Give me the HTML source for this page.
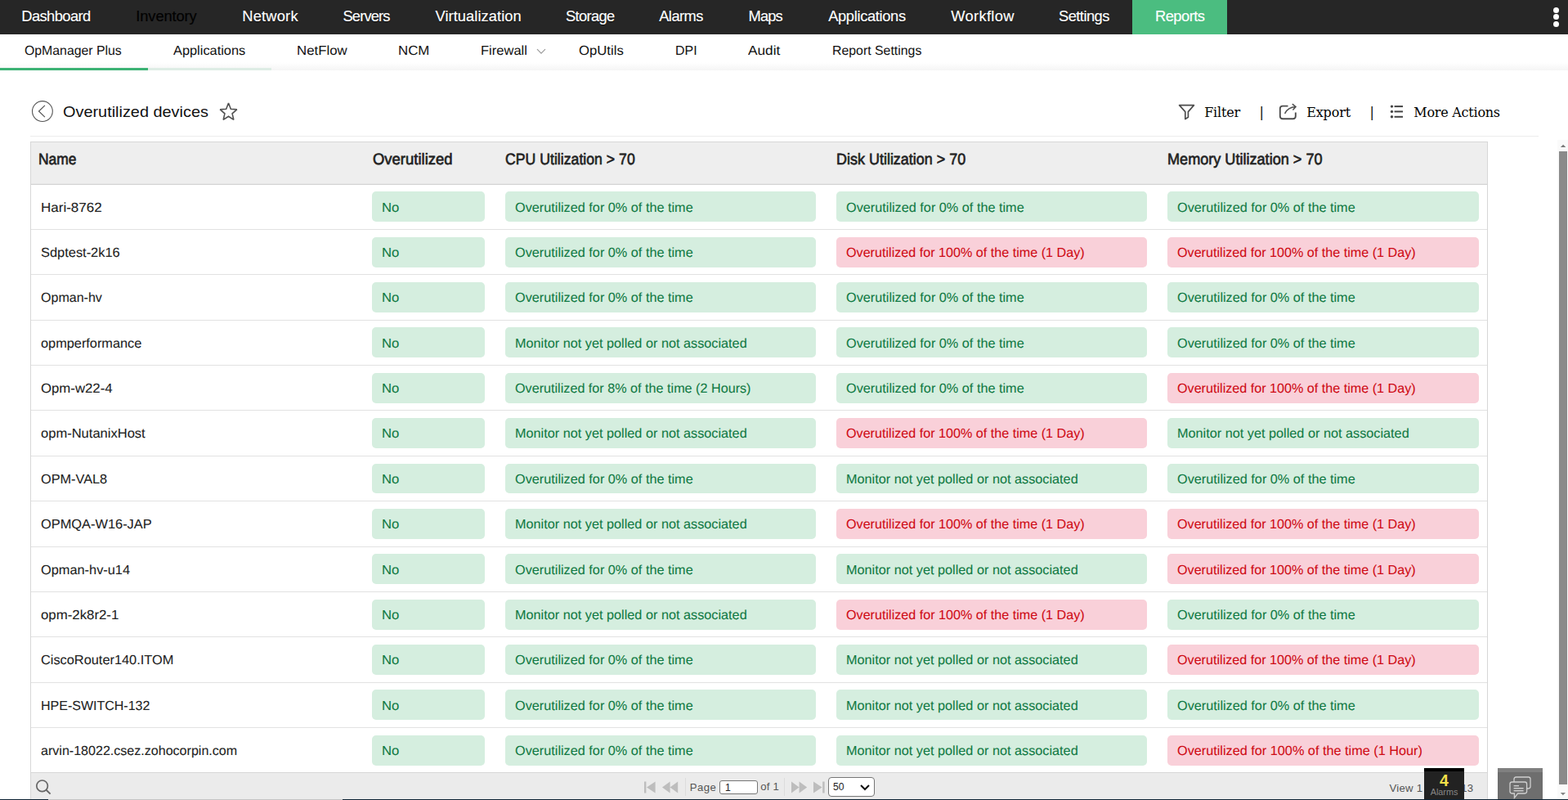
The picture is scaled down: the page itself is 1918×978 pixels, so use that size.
<!DOCTYPE html>
<html lang="en"><head><meta charset="utf-8"><title>Overutilized devices</title>
<style>
*{box-sizing:border-box;margin:0;padding:0}
a{color:inherit;text-decoration:none}
h1{font-weight:400}
html,body{width:1918px;height:978px;overflow:hidden;background:#fff}
body{position:relative;font-family:"Liberation Sans", Arial, sans-serif;font-size:16px;color:#222}
.t{position:absolute;white-space:pre;line-height:1;transform-origin:0 0}
#topnav{position:absolute;left:0;top:0;width:1918px;height:42px;background:#262626}
#topnav .t{font-size:18.3px;color:#fff;top:11px;text-shadow:0 1px 1px rgba(0,0,0,.6);-webkit-text-stroke:0.15px #fff}
#topnav .act0{text-shadow:none}
#topnav .dim{color:#020202;text-shadow:none;-webkit-text-stroke:0.2px #020202}
#rep{position:absolute;left:1385px;top:0;width:116px;height:42px;background:#4bbd80}
.dot{position:absolute;left:1900px;width:7px;height:7px;border-radius:50%;background:#fff}
#subnav{position:absolute;left:0;top:42px;width:1918px;height:44px;background:linear-gradient(#fff 0,#fff 78%,#f5f5f5 100%)}
#subnav .t{font-size:16px;color:#111;top:13px;text-rendering:geometricPrecision}
#ul1{position:absolute;left:0;top:41px;width:181px;height:3px;background:#3cb274}
#ul2{position:absolute;left:181px;top:41px;width:151px;height:3px;background:#deede5}
.ttl{font-size:18.5px;color:#111;top:128px}
.act{font-family:"DejaVu Serif", "Liberation Serif", serif;font-size:16px;color:#000;top:130px}
.sepb{font-family:"DejaVu Serif", "Liberation Serif", serif;font-size:16px;color:#000;top:130px}
#sep{position:absolute;left:37px;top:166px;width:1845px;height:1px;background:#ececec}
#tbl{position:absolute;left:37px;top:173px;width:1783px;height:806px;border:1px solid #d7d7d7;border-bottom:0;background:#fff}
#thead{position:absolute;left:38px;top:174px;width:1781px;height:51px;background:#eee}
#thb{position:absolute;left:38px;top:224px;width:1781px;height:2px;background:linear-gradient(#e8e8e8 50%,#d3d3d3 50%)}
.th{font-size:19.3px;font-weight:400;text-rendering:geometricPrecision;-webkit-text-stroke:0.65px #222;color:#222;top:185.5px}
.rb{position:absolute;left:38px;width:1781px;height:1px;background:#e2e2e2}
.nm{font-size:16px;color:#222;text-rendering:geometricPrecision;-webkit-text-stroke:0.08px currentColor}
.p{position:absolute;height:37px;border-radius:5px;font-size:16px;white-space:pre;overflow:hidden;text-rendering:geometricPrecision;-webkit-text-stroke:0.08px currentColor}
.g{background:#d5eedf;color:#117a44}
.r{background:#f9d0d9;color:#cf0a14}
.c1{left:455px;width:138px}.c2{left:618px;width:380px}.c3{left:1023px;width:380px}.c4{left:1428px;width:381px}
#pager{position:absolute;left:38px;top:944px;width:1781px;height:34px;background:#ebebeb;border-top:1px solid #d6d6d6}
.pg{font-size:13.2px;color:#555;top:956px}
#pin{position:absolute;left:880px;top:954px;width:47px;height:17px;border:1px solid #767676;border-radius:3px;background:#fff;font-size:12.2px;line-height:16px;padding-left:6px;color:#222}
#psel{position:absolute;left:1013px;top:950px;width:57px;height:24px;border:1px solid #767676;border-radius:4px;background:#fff;font-size:12.2px;line-height:23px;padding-left:5px;color:#222}
.vs{position:absolute;top:951px;width:1px;height:22px;background:#dcdcdc}
#sbt{position:absolute;left:1905px;top:171px;width:13px;height:807px;background:#fafafa}
#sbh{position:absolute;left:1907px;top:185px;width:10px;height:774px;background:#8a8a8a}
#alarm{position:absolute;left:1742px;top:939px;width:49px;height:39px;background:#222;border-top:4px solid #000}
#chat{position:absolute;left:1832px;top:939px;width:55px;height:39px;background:#6e6e6e;border-top:5px solid #808080}
#bl1{position:absolute;left:0;top:977px;width:1918px;height:1px;background:#0d2233}
#bl2{position:absolute;left:59px;top:977px;width:360px;height:1px;background:#c4c4c4}
svg{position:absolute;overflow:visible}
</style></head>
<body>
<nav id="topnav">
<div id="rep"></div>
<a href="#" id="t1" class="t" style="left:26.25px;letter-spacing:-0.56px;">Dashboard</a>
<a href="#" id="t2" class="t dim" style="left:166.33px;letter-spacing:-0.1px;">Inventory</a>
<a href="#" id="t3" class="t" style="left:296.25px;letter-spacing:0.21px;">Network</a>
<a href="#" id="t4" class="t" style="left:419.47px;letter-spacing:-0.83px;">Servers</a>
<a href="#" id="t5" class="t" style="left:532.5px;letter-spacing:0.07px;">Virtualization</a>
<a href="#" id="t6" class="t" style="left:691.97px;letter-spacing:-0.62px;">Storage</a>
<a href="#" id="t7" class="t" style="left:806.2px;letter-spacing:-0.52px;">Alarms</a>
<a href="#" id="t8" class="t" style="left:915.61px;letter-spacing:-0.88px;">Maps</a>
<a href="#" id="t9" class="t" style="left:1013.2px;letter-spacing:-0.34px;">Applications</a>
<a href="#" id="t10" class="t" style="left:1163.2px;letter-spacing:0.35px;">Workflow</a>
<a href="#" id="t11" class="t" style="left:1295.02px;letter-spacing:-0.53px;">Settings</a>
<a href="#" id="t12" class="t act0" style="left:1413.03px;letter-spacing:-0.51px;">Reports</a>
<i class="dot" style="top:8.5px"></i><i class="dot" style="top:17px"></i><i class="dot" style="top:25.5px"></i>
</nav>
<nav id="subnav"><div id="ul1"></div><div id="ul2"></div>
<a href="#" id="t13" class="t" style="left:30.25px;transform:scale(0.9892,1.0);">OpManager Plus</a>
<a href="#" id="t14" class="t" style="left:211.54px;transform:scale(1.0224,1.0);">Applications</a>
<a href="#" id="t15" class="t" style="left:362.73px;transform:scale(1.0509,1.0);">NetFlow</a>
<a href="#" id="t16" class="t" style="left:487.49px;transform:scale(1.0518,1.0);">NCM</a>
<a href="#" id="t17" class="t" style="left:587.95px;transform:scale(1.0325,1.0);">Firewall</a>
<a href="#" id="t18" class="t" style="left:708.32px;transform:scale(1.0447,1.0);">OpUtils</a>
<a href="#" id="t19" class="t" style="left:826.01px;transform:scale(0.9968,1.0);">DPI</a>
<a href="#" id="t20" class="t" style="left:914.54px;transform:scale(1.0777,1.0);">Audit</a>
<a href="#" id="t21" class="t" style="left:1017.89px;transform:scale(0.9914,1.0);">Report Settings</a>
<svg style="left:655.5px;top:17px" width="12" height="8" viewBox="0 0 12 8"><path d="M1 1.2 L6 6.2 L11 1.2" fill="none" stroke="#9a9a9a" stroke-width="1.2"/></svg>
</nav>
<svg style="left:38px;top:122px" width="28" height="28" viewBox="0 0 28 28"><circle cx="13.9" cy="14.05" r="12.4" fill="none" stroke="#555" stroke-width="1.1"/><path d="M16.9 6.9 L9.5 14 L16.9 21.1" fill="none" stroke="#555" stroke-width="1.2"/></svg>
<h1 id="t22" class="t ttl" style="left:77.23px;transform:scale(1.0747,1.03);">Overutilized devices</h1>
<svg style="left:268px;top:125px" width="23" height="23" viewBox="0 0 23 23"><path d="M11.50 1.07 L14.32 8.26 L21.77 8.83 L16.07 13.84 L17.85 21.39 L11.50 17.29 L5.15 21.39 L6.93 13.84 L1.23 8.83 L8.68 8.26 Z" fill="none" stroke="#505050" stroke-width="1.6" stroke-linejoin="miter" stroke-miterlimit="2.2"/></svg>
<svg style="left:1441px;top:127px" width="21" height="20" viewBox="0 0 21 20"><path d="M1.6 1.6 H19.4 L12.4 9.6 V16.2 L8.8 18.6 V9.6 Z" fill="none" stroke="#4d4d4d" stroke-width="1.7" stroke-linejoin="round"/></svg>
<span id="t23" class="t act" style="left:1473.14px;letter-spacing:-0.19px;">Filter</span>
<span class="t sepb" style="left:1540.4px">|</span>
<svg style="left:1564px;top:126px" width="24" height="21" viewBox="0 0 24 21"><path d="M11.5 3.6 H5 Q1.8 3.6 1.8 6.8 V16 Q1.8 19.2 5 19.2 H17.6 Q20.8 19.2 20.8 16 V11.4" fill="none" stroke="#4e4e4e" stroke-width="1.9"/><path d="M7.6 12.8 Q11.5 5.2 20.6 4.6 M16.8 1.2 L21 4.6 L17.4 8.6" fill="none" stroke="#4e4e4e" stroke-width="1.5"/></svg>
<span id="t24" class="t act" style="left:1598.14px;letter-spacing:-0.11px;">Export</span>
<span class="t sepb" style="left:1675.6px">|</span>
<svg style="left:1700px;top:127px" width="17" height="19" viewBox="0 0 17 19"><g fill="#444"><circle cx="2.5" cy="3.1" r="1.7"/><circle cx="2.5" cy="9.4" r="1.7"/><circle cx="2.5" cy="15.8" r="1.7"/><rect x="5.6" y="2.1" width="10.4" height="2"/><rect x="5.6" y="8.4" width="10.4" height="2"/><rect x="5.6" y="14.8" width="10.4" height="2"/></g></svg>
<span id="t25" class="t act" style="left:1729.27px;letter-spacing:-0.24px;">More Actions</span>
<div id="sep"></div>
<div id="tbl"></div><div id="thead"></div><div id="thb"></div>
<span id="t26" class="t th" style="left:46.77px;transform:scale(0.9031,1.0);">Name</span>
<span id="t27" class="t th" style="left:455.56px;transform:scale(0.9578,1.0);">Overutilized</span>
<span id="t28" class="t th" style="left:617.71px;transform:scale(0.9172,1.0);">CPU Utilization &gt; 70</span>
<span id="t29" class="t th" style="left:1022.77px;transform:scale(0.9319,1.0);">Disk Utilization &gt; 70</span>
<span id="t30" class="t th" style="left:1428.36px;transform:scale(0.9383,1.0);">Memory Utilization &gt; 70</span>
<span id="t31" class="t nm" style="left:50px;transform:scale(1.0620,1.0);top:247px">Hari-8762</span>
<div class="p g c1" style="top:234px"><span id="t32" class="t" style="left:12.35px;transform:scale(1.0416,1.0);top:13px">No</span></div>
<div class="p g c2" style="top:234px"><span id="t33" class="t" style="left:11.58px;transform:scale(1.0158,1.0);top:13px">Overutilized for 0% of the time</span></div>
<div class="p g c3" style="top:234px"><span id="t34" class="t" style="left:11.58px;transform:scale(1.0158,1.0);top:13px">Overutilized for 0% of the time</span></div>
<div class="p g c4" style="top:234px"><span id="t35" class="t" style="left:11.58px;transform:scale(1.0158,1.0);top:13px">Overutilized for 0% of the time</span></div>
<div class="rb" style="top:280px"></div>
<span id="t36" class="t nm" style="left:50px;transform:scale(1.0257,1.0);top:302px">Sdptest-2k16</span>
<div class="p g c1" style="top:290px"><span id="t37" class="t" style="left:12.35px;transform:scale(1.0416,1.0);top:12px">No</span></div>
<div class="p g c2" style="top:290px"><span id="t38" class="t" style="left:11.58px;transform:scale(1.0158,1.0);top:12px">Overutilized for 0% of the time</span></div>
<div class="p r c3" style="top:290px"><span id="t39" class="t" style="left:11.8px;transform:scale(1.0092,1.0);top:12px">Overutilized for 100% of the time (1 Day)</span></div>
<div class="p r c4" style="top:290px"><span id="t40" class="t" style="left:11.8px;transform:scale(1.0092,1.0);top:12px">Overutilized for 100% of the time (1 Day)</span></div>
<div class="rb" style="top:335px"></div>
<span id="t41" class="t nm" style="left:50px;transform:scale(1.0026,1.0);top:357px">Opman-hv</span>
<div class="p g c1" style="top:345px"><span id="t42" class="t" style="left:12.35px;transform:scale(1.0416,1.0);top:12px">No</span></div>
<div class="p g c2" style="top:345px"><span id="t43" class="t" style="left:11.58px;transform:scale(1.0158,1.0);top:12px">Overutilized for 0% of the time</span></div>
<div class="p g c3" style="top:345px"><span id="t44" class="t" style="left:11.58px;transform:scale(1.0158,1.0);top:12px">Overutilized for 0% of the time</span></div>
<div class="p g c4" style="top:345px"><span id="t45" class="t" style="left:11.58px;transform:scale(1.0158,1.0);top:12px">Overutilized for 0% of the time</span></div>
<div class="rb" style="top:391px"></div>
<span id="t46" class="t nm" style="left:50px;transform:scale(1.0196,1.0);top:413px">opmperformance</span>
<div class="p g c1" style="top:400px"><span id="t47" class="t" style="left:12.35px;transform:scale(1.0416,1.0);top:13px">No</span></div>
<div class="p g c2" style="top:400px"><span id="t48" class="t" style="left:11.62px;transform:scale(1.0158,1.0);top:13px">Monitor not yet polled or not associated</span></div>
<div class="p g c3" style="top:400px"><span id="t49" class="t" style="left:11.58px;transform:scale(1.0158,1.0);top:13px">Overutilized for 0% of the time</span></div>
<div class="p g c4" style="top:400px"><span id="t50" class="t" style="left:11.58px;transform:scale(1.0158,1.0);top:13px">Overutilized for 0% of the time</span></div>
<div class="rb" style="top:446px"></div>
<span id="t51" class="t nm" style="left:50px;transform:scale(1.0475,1.0);top:468px">Opm-w22-4</span>
<div class="p g c1" style="top:456px"><span id="t52" class="t" style="left:12.35px;transform:scale(1.0416,1.0);top:12px">No</span></div>
<div class="p g c2" style="top:456px"><span id="t53" class="t" style="left:11.58px;transform:scale(1.0107,1.0);top:12px">Overutilized for 8% of the time (2 Hours)</span></div>
<div class="p g c3" style="top:456px"><span id="t54" class="t" style="left:11.58px;transform:scale(1.0158,1.0);top:12px">Overutilized for 0% of the time</span></div>
<div class="p r c4" style="top:456px"><span id="t55" class="t" style="left:11.8px;transform:scale(1.0092,1.0);top:12px">Overutilized for 100% of the time (1 Day)</span></div>
<div class="rb" style="top:501px"></div>
<span id="t56" class="t nm" style="left:50px;transform:scale(1.0332,1.0);top:523px">opm-NutanixHost</span>
<div class="p g c1" style="top:511px"><span id="t57" class="t" style="left:12.35px;transform:scale(1.0416,1.0);top:12px">No</span></div>
<div class="p g c2" style="top:511px"><span id="t58" class="t" style="left:11.62px;transform:scale(1.0158,1.0);top:12px">Monitor not yet polled or not associated</span></div>
<div class="p r c3" style="top:511px"><span id="t59" class="t" style="left:11.8px;transform:scale(1.0092,1.0);top:12px">Overutilized for 100% of the time (1 Day)</span></div>
<div class="p g c4" style="top:511px"><span id="t60" class="t" style="left:11.62px;transform:scale(1.0158,1.0);top:12px">Monitor not yet polled or not associated</span></div>
<div class="rb" style="top:557px"></div>
<span id="t61" class="t nm" style="left:50px;transform:scale(1.0173,1.0);top:579px">OPM-VAL8</span>
<div class="p g c1" style="top:567px;height:36px"><span id="t62" class="t" style="left:12.35px;transform:scale(1.0416,1.0);top:12px">No</span></div>
<div class="p g c2" style="top:567px;height:36px"><span id="t63" class="t" style="left:11.58px;transform:scale(1.0158,1.0);top:12px">Overutilized for 0% of the time</span></div>
<div class="p g c3" style="top:567px;height:36px"><span id="t64" class="t" style="left:11.62px;transform:scale(1.0158,1.0);top:12px">Monitor not yet polled or not associated</span></div>
<div class="p g c4" style="top:567px;height:36px"><span id="t65" class="t" style="left:11.58px;transform:scale(1.0158,1.0);top:12px">Overutilized for 0% of the time</span></div>
<div class="rb" style="top:612px"></div>
<span id="t66" class="t nm" style="left:50px;transform:scale(1.0239,1.0);top:634px">OPMQA-W16-JAP</span>
<div class="p g c1" style="top:622px"><span id="t67" class="t" style="left:12.35px;transform:scale(1.0416,1.0);top:12px">No</span></div>
<div class="p g c2" style="top:622px"><span id="t68" class="t" style="left:11.62px;transform:scale(1.0158,1.0);top:12px">Monitor not yet polled or not associated</span></div>
<div class="p r c3" style="top:622px"><span id="t69" class="t" style="left:11.8px;transform:scale(1.0092,1.0);top:12px">Overutilized for 100% of the time (1 Day)</span></div>
<div class="p r c4" style="top:622px"><span id="t70" class="t" style="left:11.8px;transform:scale(1.0092,1.0);top:12px">Overutilized for 100% of the time (1 Day)</span></div>
<div class="rb" style="top:668px"></div>
<span id="t71" class="t nm" style="left:50px;transform:scale(1.0219,1.0);top:690px">Opman-hv-u14</span>
<div class="p g c1" style="top:677px"><span id="t72" class="t" style="left:12.35px;transform:scale(1.0416,1.0);top:13px">No</span></div>
<div class="p g c2" style="top:677px"><span id="t73" class="t" style="left:11.58px;transform:scale(1.0158,1.0);top:13px">Overutilized for 0% of the time</span></div>
<div class="p g c3" style="top:677px"><span id="t74" class="t" style="left:11.62px;transform:scale(1.0158,1.0);top:13px">Monitor not yet polled or not associated</span></div>
<div class="p r c4" style="top:677px"><span id="t75" class="t" style="left:11.8px;transform:scale(1.0092,1.0);top:13px">Overutilized for 100% of the time (1 Day)</span></div>
<div class="rb" style="top:723px"></div>
<span id="t76" class="t nm" style="left:50px;transform:scale(1.0506,1.0);top:745px">opm-2k8r2-1</span>
<div class="p g c1" style="top:733px"><span id="t77" class="t" style="left:12.35px;transform:scale(1.0416,1.0);top:12px">No</span></div>
<div class="p g c2" style="top:733px"><span id="t78" class="t" style="left:11.62px;transform:scale(1.0158,1.0);top:12px">Monitor not yet polled or not associated</span></div>
<div class="p r c3" style="top:733px"><span id="t79" class="t" style="left:11.8px;transform:scale(1.0092,1.0);top:12px">Overutilized for 100% of the time (1 Day)</span></div>
<div class="p g c4" style="top:733px"><span id="t80" class="t" style="left:11.58px;transform:scale(1.0158,1.0);top:12px">Overutilized for 0% of the time</span></div>
<div class="rb" style="top:778px"></div>
<span id="t81" class="t nm" style="left:50px;transform:scale(1.0215,1.0);top:800px">CiscoRouter140.ITOM</span>
<div class="p g c1" style="top:788px"><span id="t82" class="t" style="left:12.35px;transform:scale(1.0416,1.0);top:12px">No</span></div>
<div class="p g c2" style="top:788px"><span id="t83" class="t" style="left:11.58px;transform:scale(1.0158,1.0);top:12px">Overutilized for 0% of the time</span></div>
<div class="p g c3" style="top:788px"><span id="t84" class="t" style="left:11.62px;transform:scale(1.0158,1.0);top:12px">Monitor not yet polled or not associated</span></div>
<div class="p r c4" style="top:788px"><span id="t85" class="t" style="left:11.8px;transform:scale(1.0092,1.0);top:12px">Overutilized for 100% of the time (1 Day)</span></div>
<div class="rb" style="top:834px"></div>
<span id="t86" class="t nm" style="left:50px;transform:scale(0.9999,1.0);top:856px">HPE-SWITCH-132</span>
<div class="p g c1" style="top:843px"><span id="t87" class="t" style="left:12.35px;transform:scale(1.0416,1.0);top:13px">No</span></div>
<div class="p g c2" style="top:843px"><span id="t88" class="t" style="left:11.58px;transform:scale(1.0158,1.0);top:13px">Overutilized for 0% of the time</span></div>
<div class="p g c3" style="top:843px"><span id="t89" class="t" style="left:11.62px;transform:scale(1.0158,1.0);top:13px">Monitor not yet polled or not associated</span></div>
<div class="p g c4" style="top:843px"><span id="t90" class="t" style="left:11.58px;transform:scale(1.0158,1.0);top:13px">Overutilized for 0% of the time</span></div>
<div class="rb" style="top:889px"></div>
<span id="t91" class="t nm" style="left:50px;transform:scale(1.0037,1.0);top:911px">arvin-18022.csez.zohocorpin.com</span>
<div class="p g c1" style="top:899px"><span id="t92" class="t" style="left:12.35px;transform:scale(1.0416,1.0);top:12px">No</span></div>
<div class="p g c2" style="top:899px"><span id="t93" class="t" style="left:11.58px;transform:scale(1.0158,1.0);top:12px">Overutilized for 0% of the time</span></div>
<div class="p g c3" style="top:899px"><span id="t94" class="t" style="left:11.62px;transform:scale(1.0158,1.0);top:12px">Monitor not yet polled or not associated</span></div>
<div class="p r c4" style="top:899px"><span id="t95" class="t" style="left:11.8px;transform:scale(1.0155,1.0);top:12px">Overutilized for 100% of the time (1 Hour)</span></div>
<div id="pager"></div>
<svg style="left:42px;top:951px" width="22" height="22" viewBox="0 0 22 22"><circle cx="9.6" cy="9.8" r="6.8" fill="none" stroke="#666" stroke-width="1.7"/><path d="M14.6 14.8 L19.6 19.6" stroke="#666" stroke-width="1.9" fill="none"/></svg>
<svg style="left:788px;top:955px" width="15" height="15" viewBox="0 0 15 15"><path d="M0 0.5 H2.4 V14.5 H0 Z M13.6 0.5 V14.5 L3 7.5 Z" fill="#bdbdbd"/></svg>
<svg style="left:810px;top:955px" width="20" height="15" viewBox="0 0 20 15"><path d="M9.6 0.5 V14.5 L0 7.5 Z M19.2 0.5 V14.5 L9.6 7.5 Z" fill="#bdbdbd"/></svg>
<i class="vs" style="left:838px"></i>
<span id="t96" class="t pg" style="left:843.72px;letter-spacing:0.46px;">Page</span>
<div id="pin">1</div>
<span id="t97" class="t pg" style="left:930.28px;letter-spacing:0.15px;top:955px">of 1</span>
<i class="vs" style="left:959px"></i>
<svg style="left:968px;top:955px" width="20" height="15" viewBox="0 0 20 15"><path d="M0 0.5 V14.5 L9.6 7.5 Z M9.6 0.5 V14.5 L19.2 7.5 Z" fill="#bdbdbd"/></svg>
<svg style="left:995px;top:955px" width="15" height="15" viewBox="0 0 15 15"><path d="M0 0.5 V14.5 L10.6 7.5 Z M11.2 0.5 H13.6 V14.5 H11.2 Z" fill="#bdbdbd"/></svg>
<div id="psel">50<svg style="left:38px;top:7.6px" width="12" height="8" viewBox="0 0 12 8"><path d="M1 1 L6 6 L11 1" fill="none" stroke="#111" stroke-width="2"/></svg></div>
<span id="t98" class="t pg" style="left:1699.5px;letter-spacing:0.24px;top:957px">View 1 - 13 of 13</span>
<div id="sbt"></div><div id="sbh"></div>
<svg style="left:1908px;top:176px" width="8" height="5" viewBox="0 0 8 5"><path d="M0.9 4.1 L4.1 0.7 L7.3 4.1 Z" fill="#777"/></svg>
<svg style="left:1908px;top:968px" width="8" height="5" viewBox="0 0 8 5"><path d="M0.8 1 L7 1 L3.9 4.3 Z" fill="#858585"/></svg>
<div id="alarm"><span class="t" style="left:0;width:49px;text-align:center;top:2px;font-size:19.5px;font-weight:700;color:#f5e04a">4</span><span class="t" style="left:0;width:49px;text-align:center;top:20px;font-size:10.8px;color:#888">Alarms</span></div>
<div id="chat"><svg style="left:13px;top:3px" width="30" height="30" viewBox="0 0 30 30"><g fill="none" stroke="#cfcfcf" stroke-width="1.3"><path d="M7 9 V5.4 Q7 3 9.4 3 H24.6 Q27 3 27 5.4 V14.6 Q27 17 24.6 17 H22.6"/><path d="M4.4 9 H20.2 Q22.6 9 22.6 11.4 V20.6 Q22.6 23 20.2 23 H11.6 L7.4 28.4 V23 H4.4 Q2 23 2 20.600 V11.4 Q2 9 4.4 9 Z"/></g><g fill="#cfcfcf"><rect x="6.6" y="13" width="6.4" height="1.4"/><rect x="6.6" y="16" width="12" height="1.4"/><rect x="6.6" y="19" width="12" height="1.4"/></g></svg></div>
<div id="bl1"></div><div id="bl2"></div>
</body></html>
